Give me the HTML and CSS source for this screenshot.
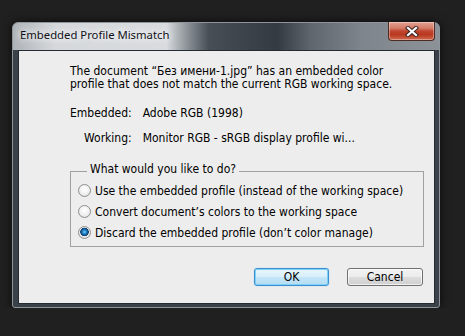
FILE: index.html
```html
<!DOCTYPE html>
<html lang="en">
<head>
    <meta charset="UTF-8">
    <meta name="viewport" content="width=device-width, initial-scale=1.0">
    <title>Embedded Profile Mismatch</title>
    <link rel="stylesheet" href="styles.css">
</head>
<body>
    <div class="window">
        <div class="titlebar">
            <span class="title">Embedded Profile Mismatch</span>
            <button class="close-btn" aria-label="Close">
                <svg width="14" height="11" viewBox="0 0 14 11">
                    <path d="M3 2 L11 9 M11 2 L3 9" stroke="#3b2420" stroke-width="4.2" stroke-linecap="square" fill="none"/>
                    <path d="M3 2 L11 9 M11 2 L3 9" stroke="#ffffff" stroke-width="2.2" stroke-linecap="square" fill="none"/>
                </svg>
            </button>
        </div>

        <div class="client">
            <p class="message">The document “Без имени-1.jpg” has an embedded color<br>profile that does not match the current RGB working space.</p>

            <div class="profiles">
                <span class="label">Embedded:</span><span>Adobe RGB (1998)</span>
                <span class="label">Working:</span><span>Monitor RGB - sRGB display profile wi...</span>
            </div>

            <fieldset class="options">
                <legend>What would you like to do?</legend>
                <label class="option"><input type="radio" name="policy">Use the embedded profile (instead of the working space)</label>
                <label class="option"><input type="radio" name="policy">Convert document’s colors to the working space</label>
                <label class="option"><input type="radio" name="policy" checked>Discard the embedded profile (don’t color manage)</label>
            </fieldset>

            <div class="actions">
                <button class="btn btn-default">OK</button>
                <button class="btn">Cancel</button>
            </div>
        </div>
    </div>
</body>
</html>
```

FILE: styles.css
```css
body {
    margin: 0;
    background: #202020;
    font-family: "DejaVu Sans Condensed", "DejaVu Sans", sans-serif;
    font-size: 12px;
    color: #000;
}
.window {
    width: 428px;
    height: 286px;
    margin: 22px 0 0 12px;
    box-sizing: border-box;
    padding: 0 4px 4px 5px;
    border: 1px solid #8e959c;
    border-radius: 6px 6px 3px 3px;
    background:
        linear-gradient(to right, #aeb3b8 0, #d6d9dc 10%, #d9dcdf 36%, #8a9096 41%, #474e55 46%, #343a41 62%, #5f666d 70%, #7f858c 82%, #8d9298 100%) top / 100% 27px no-repeat,
        #3a4148;
    box-shadow: 0 0 10px rgba(0,0,0,0.7);
}
.titlebar {
    display: flex;
    align-items: flex-start;
    height: 27px;
}
.title {
    margin: 4px 0 0 2px;
    font-family: "Noto Sans", sans-serif;
    font-size: 11.3px;
    line-height: 16px;
    color: #101018;
    text-shadow: 0 0 6px #fff, 0 0 10px #fff;
}
.close-btn {
    display: flex;
    align-items: center;
    justify-content: center;
    margin: -1px 0 0 auto;
    width: 47px;
    height: 19px;
    padding: 0;
    border: 1px solid #4e2a24;
    border-top: none;
    border-radius: 0 0 4px 4px;
    background: linear-gradient(#e2a293 0, #d47a66 35%, #c0452f 50%, #b8391f 70%, #d06a50 100%);
    box-shadow: inset 0 0 0 1px rgba(255,255,255,0.35);
}
.client {
    height: 254px;
    box-sizing: border-box;
    border: 1px solid #242b33;
    background: #ededed;
    padding-top: 14px;
}
.message {
    margin: 0 0 16px 51px;
    line-height: 13px;
}
.profiles {
    display: grid;
    grid-template-columns: auto 1fr;
    column-gap: 11px;
    row-gap: 12px;
    margin-left: 51px;
    line-height: 13px;
}
.label {
    justify-self: end;
}
.options {
    width: 354px;
    box-sizing: border-box;
    margin: 18px 0 0 51px;
    padding: 0 0 3px 7px;
    border: 1px solid #a0a0a0;
}
.options legend {
    margin-left: 9px;
    padding: 0 3px 4px;
    line-height: 13px;
}
.option {
    display: flex;
    align-items: center;
    height: 21px;
}
.option input {
    appearance: none;
    width: 13px;
    height: 13px;
    margin: 0 4px 0 0;
    box-sizing: border-box;
    border: 1px solid #8e8f8f;
    border-radius: 50%;
    background: radial-gradient(circle at 50% 40%, #ffffff 0, #f3f3f3 45%, #d6d6d6 100%);
}
.option input:checked {
    background:
        radial-gradient(circle at 50% 45%, #8fd8ff 0, #2a8fd4 1.5px, #0d4f8c 3.5px, #1b3f66 4px, transparent 4.6px),
        radial-gradient(circle at 50% 40%, #ffffff 0, #f3f3f3 45%, #d6d6d6 100%);
}
.actions {
    display: flex;
    justify-content: flex-end;
    gap: 18px;
    margin-top: 21px;
    padding-right: 11px;
}
.btn {
    width: 76px;
    height: 18px;
    box-sizing: border-box;
    padding: 0;
    border: 1px solid #707070;
    border-radius: 3px;
    font: inherit;
    line-height: 14px;
    color: #000;
    background: linear-gradient(#f3f3f3 0, #ebebeb 50%, #dddddd 50%, #cfcfcf 100%);
    box-shadow: inset 0 0 0 1px rgba(255,255,255,0.7);
}
.btn-default {
    width: 75px;
    border-color: #3c8fd0;
    background: linear-gradient(#e8f6fd 0, #d8effb 50%, #c4e6f8 50%, #b5dcf2 100%);
    box-shadow: inset 0 0 0 1px #7fd0f7, 0 0 1px #5cc0f5;
}
```
